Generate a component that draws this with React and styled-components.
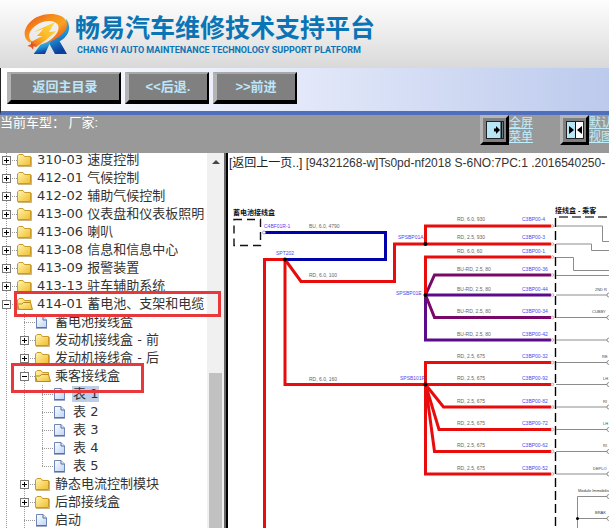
import React from 'react';
import styled, { createGlobalStyle } from 'styled-components';

const GlobalStyle = createGlobalStyle`
    * {
        box-sizing: border-box;
    }

    body {
        margin: 0;
        background: #fff;
        font-family: "Liberation Sans", "Noto Sans CJK SC", sans-serif;
        font-size: 13px;
        overflow: hidden;
    }
`;

const Page = styled.div`
    display: flex;
    flex-direction: column;
    height: 100vh;
    overflow: hidden;
`;

const Banner = styled.header`
    display: flex;
    align-items: flex-start;
    gap: 5px;
    flex: none;
    height: 68px;
    padding: 12px 0 0 23px;
    background: linear-gradient(#fdfdfd, #ececec 50%, #d9d9d9);
`;

const Brand = styled.div`
    color: #0b74b5;
    white-space: nowrap;
`;

const BrandName = styled.h1`
    margin: 0;
    font-size: 25px;
    line-height: 32px;
    font-weight: 700;
`;

const BrandSub = styled.p`
    margin: 0;
    padding-left: 2px;
    font-family: Roboto, "Liberation Sans", sans-serif;
    font-size: 9px;
    line-height: 13px;
    font-weight: 700;
`;

const NavBar = styled.nav`
    display: flex;
    align-items: flex-start;
    gap: 4px;
    flex: none;
    height: 47px;
    padding: 4px 6px;
    border-left: 1px solid #222;
    border-bottom: 4px solid #4f6fbc;
    background: linear-gradient(90deg, #fff, #e6ebfa 45%, #d3dcf4 70%, #bccaec);
`;

const NavButton = styled.button`
    width: ${props => props.$wide ? '114px' : '84px'};
    height: 32px;
    padding: 0;
    border-style: solid;
    border-width: 2px 2px 4px 4px;
    border-color: #a8a8a8 #000 #000 #b4b4b4;
    background: #808080;
    color: #bce6fb;
    font: inherit;
    font-weight: 700;
    line-height: 20px;
`;

const StatusBar = styled.div`
    display: flex;
    align-items: flex-start;
    justify-content: space-between;
    flex: none;
    height: 38px;
    overflow: hidden;
    background: #999;
    color: #fff;
`;

const CarInfo = styled.div`
    line-height: 16px;
    white-space: pre;
`;

const ViewTools = styled.div`
    display: flex;
    gap: 27px;
    flex: none;
    margin-right: -4px;
`;

const ViewTool = styled.div`
    display: flex;
`;

const ViewButton = styled.button`
    display: flex;
    align-items: center;
    justify-content: center;
    width: 29px;
    height: 30px;
    padding: 0;
    border: 3px solid;
    border-color: #b5b5b5 #000 #000 #b5b5b5;
    background: #808080;
`;

const ViewLink = styled.a`
    width: 24px;
    padding-top: 1px;
    color: #bfeefb;
    font-size: 12px;
    line-height: 14px;
    text-decoration: underline;
`;

const Content = styled.div`
    display: flex;
    flex: 1;
    min-height: 0;
`;

const Sidebar = styled.aside`
    display: flex;
    flex: 0 0 228px;
    overflow: hidden;
    border-right: 2px solid #000;
`;

const Tree = styled.ul`
    flex: 1;
    min-width: 0;
    margin: -2px 0 0;
    padding: 0;
    list-style: none;
    color: #333;
    font-family: "DejaVu Sans", "Noto Sans CJK SC", sans-serif;
`;

const TreeRow = styled.li`
    position: relative;
    display: flex;
    align-items: center;
    height: 18px;
    white-space: nowrap;
`;

const Guide = styled.span`
    flex: none;
    width: 18px;
    height: 18px;
    background: repeating-linear-gradient(#999 0 1px, transparent 1px 2px) 6px 0 / 1px 100% no-repeat;
`;

const Branch = styled.span`
    flex: none;
    display: flex;
    align-items: center;
    width: 17px;
    height: 18px;
    padding-left: 2px;
    background:
        repeating-linear-gradient(#999 0 1px, transparent 1px 2px) 6px 0 / 1px ${props => props.$last ? '50%' : '100%'} no-repeat,
        repeating-linear-gradient(90deg, #999 0 1px, transparent 1px 2px) 6px 9px / 11px 1px no-repeat;
`;

const Toggle = styled.button`
    display: flex;
    width: 9px;
    height: 9px;
    padding: 0;
    border: 1px solid #777;
    background: #fff;
`;

const TreeLink = styled.a`
    margin-left: 1px;
    padding: 0 1px;
    background: ${props => props.$selected ? '#bccfe6' : 'none'};
    color: inherit;
    line-height: 16px;
    text-decoration: none;
`;

/* red frame drawn over a tree row */
const Mark = styled.span`
    position: absolute;
    z-index: 1;
    top: -4px;
    left: ${props => props.$left}px;
    width: ${props => props.$width}px;
    height: ${props => props.$height}px;
    border: 3px solid #e9383b;
    pointer-events: none;
`;

const ScrollBar = styled.div`
    display: flex;
    flex-direction: column;
    align-items: center;
    justify-content: space-between;
    flex: none;
    width: 19px;
    padding-top: 6px;
    border-right: 2px solid #666;
    background: #f0f0f0;
`;

const ScrollThumb = styled.div`
    width: 13px;
    height: 42%;
    background: #c1c1c1;
`;

const Main = styled.main`
    flex: 1;
    min-width: 0;
    overflow: hidden;
`;

const DocTitle = styled.div`
    height: 25px;
    padding-left: 1px;
    color: #333;
    font-size: 12px;
    line-height: 20px;
    white-space: nowrap;

    a {
        color: #222;
        text-decoration: none;
    }
`;

const Diagram = styled.svg`
    display: block;
    font-family: "Liberation Sans", "Noto Sans CJK SC", sans-serif;
    font-size: 5px;
`;

const treeItems = [
    { level: 0, type: 'folder', text: '310-03 速度控制' },
    { level: 0, type: 'folder', text: '412-01 气候控制' },
    { level: 0, type: 'folder', text: '412-02 辅助气候控制' },
    { level: 0, type: 'folder', text: '413-00 仪表盘和仪表板照明' },
    { level: 0, type: 'folder', text: '413-06 喇叭' },
    { level: 0, type: 'folder', text: '413-08 信息和信息中心' },
    { level: 0, type: 'folder', text: '413-09 报警装置' },
    { level: 0, type: 'folder', text: '413-13 驻车辅助系统' },
    { level: 0, type: 'open', text: '414-01 蓄电池、支架和电缆', mark: { left: 14, width: 207, height: 26 } },
    { level: 1, type: 'page', text: '蓄电池接线盒' },
    { level: 1, type: 'folder', text: '发动机接线盒 - 前' },
    { level: 1, type: 'folder', text: '发动机接线盒 - 后' },
    { level: 1, type: 'open', text: '乘客接线盒', mark: { left: 11, width: 133, height: 30 } },
    { level: 2, type: 'page', text: '表 1', selected: true },
    { level: 2, type: 'page', text: '表 2' },
    { level: 2, type: 'page', text: '表 3' },
    { level: 2, type: 'page', text: '表 4' },
    { level: 2, type: 'page', text: '表 5', last: true },
    { level: 1, type: 'folder', text: '静态电流控制模块' },
    { level: 1, type: 'folder', text: '后部接线盒' },
    { level: 1, type: 'page', text: '启动' },
];

const RED = '#e80c0c';
const BLUE = '#0000ac';
const PLUM = '#7a0868';
const VIOLET = '#5a0c8c';

const wires = [
    [BLUE, '265,232.5 385.5,232.5 385.5,259.5 285,259.5'],
    [RED, '285,259.5 264.5,259.5 264.5,530'],
    [RED, '285,259.5 285,384.5 551,384.5'],
    [RED, '285,259.5 301,281.5 394.5,281.5 394.5,244 551,244'],
    [RED, '425.5,244 425.5,226 551,226'],
    [VIOLET, '425.5,295 425.5,340 551,340'],
    [PLUM, '425.5,295 434.5,275 551,275'],
    [PLUM, '425.5,295 434.5,317.5 551,317.5'],
    [VIOLET, '425.5,295 551,295'],
    [RED, '425.5,295 425.5,257 551,257'],
    [RED, '425.5,384.5 425.5,362.5 551,362.5'],
    [RED, '425.5,384.5 443.5,407 551,407'],
    [RED, '425.5,384.5 439,429.5 551,429.5'],
    [RED, '425.5,384.5 434.5,451.5 551,451.5'],
    [RED, '425.5,384.5 425.5,474 551,474'],
];

const thinWires = [
    '556,226 602.5,226 602.5,241.5 700,241.5',
    '556,244 591.5,244 591.5,250.5 700,250.5',
    '556,257.5 573.5,257.5 573.5,270.5 700,270.5',
    '556,275.5 700,275.5',
    '607,496.5 577.5,496.5 577.5,530',
    '577.5,518.5 607,518.5',
];

const pins = [
    { y: 226, base: 221, wire: 'RD, 6.0, 930', name: 'C3BP00-4' },
    { y: 244, base: 239, wire: 'RD, 2.5, 930', name: 'C3BP00-3' },
    { y: 257, base: 253, wire: 'RD, 6.0, 60', name: 'C3BP00-1' },
    { y: 275, base: 271, wire: 'BU-RD, 2.5, 80', name: 'C3BP00-36' },
    { y: 295, base: 291, wire: 'BU-RD, 2.5, 80', name: 'C3BP00-44', end: '2ND R', endX: 595 },
    { y: 317.5, base: 313, wire: 'BU-RD, 2.5, 80', name: 'C3BP00-34', end: 'CUBBY', endX: 592 },
    { y: 340, base: 336, wire: 'BU-RD, 2.5, 80', name: 'C3BP00-42' },
    { y: 362.5, base: 358, wire: 'RD, 2.5, 675', name: 'C3BP00-32', end: 'RE', endX: 602 },
    { y: 384.5, base: 380, wire: 'RD, 2.5, 675', name: 'C3BP00-92', end: 'LH', endX: 603 },
    { y: 407, base: 403, wire: 'RD, 2.5, 675', name: 'C3BP00-82', end: 'RI', endX: 603 },
    { y: 429.5, base: 425, wire: 'RD, 2.5, 675', name: 'C3BP00-72', end: 'LH', endX: 603 },
    { y: 451.5, base: 447, wire: 'RD, 2.5, 675', name: 'C3BP00-62', end: 'RI', endX: 603 },
    { y: 474, base: 470, wire: 'RD, 2.5, 675', name: 'C3BP00-52', end: 'DEPLO', endX: 593 },
];

const Logo = () => (
    <svg width="47" height="43" viewBox="40 20 141 129" aria-hidden="true">
        <defs>
            <linearGradient id="ring" x1="0" y1="0" x2="1" y2="1">
                <stop offset="0" stopColor="#e8481c" />
                <stop offset="0.35" stopColor="#f58a1a" />
                <stop offset="0.6" stopColor="#f9a324" />
                <stop offset="0.8" stopColor="#ee6a1c" />
                <stop offset="1" stopColor="#d83a1c" />
            </linearGradient>
            <linearGradient id="bolt" x1="1" y1="0" x2="0" y2="1">
                <stop offset="0" stopColor="#ffe14a" />
                <stop offset="0.6" stopColor="#fbb021" />
                <stop offset="1" stopColor="#ea5a1c" />
            </linearGradient>
            <linearGradient id="leg" x1="0" y1="0" x2="0.3" y2="1">
                <stop offset="0" stopColor="#6cc3a8" />
                <stop offset="0.55" stopColor="#2197dc" />
                <stop offset="1" stopColor="#0b3f9c" />
            </linearGradient>
        </defs>
        <path d="M170 40 Q190 72 164 98 Q158 104 150 108 L172 146 L136 146 L116 110 Q160 92 168 62 Z" fill="url(#leg)" />
        <path d="M92 118 L124 106 L106 146 L72 146 Z" fill="url(#leg)" />
        <path d="M60 112 C34 96 42 58 80 36 C112 20 156 22 170 46 C180 74 152 100 106 114 C134 98 150 78 146 62 C140 44 106 42 82 58 C58 74 52 94 66 108 Z" fill="url(#ring)" />
        <path d="M72 80 L136 50 L118 80 L140 78 L106 106 L78 126 L66 120 L64 110 L98 92 L82 92 L102 70 Z" fill="url(#bolt)" />
        <path d="M66 106 L70 116 L80 119 L72 123 L70 133 L64 125 L53 122 L63 117 Z" fill="#e4551f" />
    </svg>
);

const FolderIcon = ({ open }) => (
    <svg width="18" height="18" viewBox="0 0 18 18" aria-hidden="true">
        <defs>
            <linearGradient id="folder" x1="0" y1="0" x2="1" y2="1">
                <stop offset="0" stopColor="#fff6b0" />
                <stop offset="1" stopColor="#f0bd2c" />
            </linearGradient>
        </defs>
        <path d="M.5 14.5 V5 L2 3.5 H6 L7.5 5.5 H13.5 V14.5 Z" fill="url(#folder)" stroke="#c99a28" />
        {open
            ? <path d="M2 14.5 L.5 9 H5 L6.500 7.5 H13.500 L15.500 14.5 Z" fill="url(#folder)" stroke="#b98a1e" />
            : <path d="M1 15.5 H14.5 V6" fill="none" stroke="#a98030" opacity="0.6" />}
    </svg>
);

const PageIcon = () => (
    <svg width="18" height="18" viewBox="0 0 18 18" aria-hidden="true">
        <defs>
            <linearGradient id="page" x1="0" y1="0" x2="1" y2="1">
                <stop offset="0" stopColor="#fff" />
                <stop offset="1" stopColor="#bcd3f6" />
            </linearGradient>
        </defs>
        <path d="M1.5 3.5 H8 L11.5 7 V14.5 H1.5 Z" fill="url(#page)" stroke="#7186b8" />
        <path d="M8 3.5 V7 H11.5" fill="#e8f0fc" stroke="#56699c" />
        <path d="M1 15 H12" stroke="#46598c" />
    </svg>
);

const TreeItem = ({ item }) => (
    <TreeRow>
        {item.level > 0 && <Guide />}
        {item.level > 1 && <Guide />}
        <Branch $last={item.last}>
            {item.type !== 'page' && (
                <Toggle aria-label={item.text}>
                    <svg width="7" height="7" viewBox="0 0 7 7" aria-hidden="true">
                        <path d={item.type === 'open' ? 'M1 3.5 H6' : 'M1 3.5 H6 M3.5 1 V6'} stroke="#000" />
                    </svg>
                </Toggle>
            )}
        </Branch>
        {item.type === 'page' ? <PageIcon /> : <FolderIcon open={item.type === 'open'} />}
        <TreeLink href="#" $selected={item.selected}>{item.text}</TreeLink>
        {item.mark && <Mark $left={item.mark.left} $width={item.mark.width} $height={item.mark.height} />}
    </TreeRow>
);

const WiringDiagram = () => (
    <Diagram width="381" height="350" viewBox="228 178 381 350">
        <g fontSize="7" fontWeight="700" fill="#111">
            <text x="233" y="215">蓄电池接线盒</text>
            <text x="555" y="213">接线盒 - 乘客</text>
        </g>
        <rect x="234" y="219.5" width="26.5" height="26" fill="none" stroke="#111" strokeWidth="1.4" strokeDasharray="8 5" />
        <path d="M555.5 218 V530" stroke="#000" strokeWidth="1.4" strokeDasharray="9 4" />
        <path d="M559 217 H700" stroke="#444" strokeWidth="1.4" strokeDasharray="9 4" />

        {thinWires.map(points => (
            <polyline key={points} points={points} fill="none" stroke="#8c8c8c" strokeWidth="1" />
        ))}
        {wires.map(([color, points]) => (
            <polyline key={points} points={points} fill="none" stroke={color} strokeWidth="3" />
        ))}

        {pins.map(pin => (
            <g key={pin.name}>
                <text x="457" y={pin.base} fill="#666">{pin.wire}</text>
                <text x="522" y={pin.base} fill="#4a4af0">{pin.name}</text>
                <circle cx="552.5" cy={pin.y} r="1.3" fill="#fff" stroke="#d08080" strokeWidth="0.7" />
                {pin.y > 290 && (
                    <>
                        <path d={`M556 ${pin.y} H607`} stroke="#8c8c8c" />
                        <circle cx="609" cy={pin.y} r="2" fill="#fff" stroke="#777" strokeWidth="0.8" />
                    </>
                )}
                {pin.end && <text x={pin.endX} y={pin.base} fontSize="4" fill="#444">{pin.end}</text>}
            </g>
        ))}

        <circle cx="264" cy="232.5" r="1.5" fill="#fff" stroke="#8080d0" strokeWidth="0.7" />
        <circle cx="609" cy="496.5" r="2" fill="#fff" stroke="#777" strokeWidth="0.8" />
        <circle cx="609" cy="518.5" r="2" fill="#fff" stroke="#777" strokeWidth="0.8" />
        <circle cx="285" cy="259.5" r="2" />
        <circle cx="425.5" cy="244" r="2" />
        <circle cx="425.5" cy="295" r="2" />
        <circle cx="425.5" cy="384.5" r="2" />
        <circle cx="577.5" cy="518.5" r="1.5" />

        <g fill="#666">
            <text x="309" y="228">BU, 6.0, 4790</text>
            <text x="309" y="277">RD, 6.0, 100</text>
            <text x="309" y="381">RD, 6.0, 160</text>
        </g>
        <g fill="#4a4af0">
            <text x="264" y="228">C4BF01R-1</text>
            <text x="276" y="255">SPT202</text>
            <text x="398" y="239">SPSBP01A</text>
            <text x="396" y="295">SPSBP01E</text>
            <text x="400" y="380">SPSB101F</text>
        </g>
        <g fontSize="4" fill="#333">
            <text x="578" y="492">Module Immobilis</text>
            <text x="595" y="514">BRAK</text>
        </g>
    </Diagram>
);

const App = () => {
    return (
        <>
            <GlobalStyle />
            <Page>
                <Banner>
                    <Logo />
                    <Brand>
                        <BrandName>畅易汽车维修技术支持平台</BrandName>
                        <BrandSub>CHANG YI AUTO MAINTENANCE TECHNOLOGY SUPPORT PLATFORM</BrandSub>
                    </Brand>
                </Banner>
                <NavBar>
                    <NavButton $wide>返回主目录</NavButton>
                    <NavButton>&lt;&lt;后退.</NavButton>
                    <NavButton>&gt;&gt;前进</NavButton>
                </NavBar>
                <StatusBar>
                    <CarInfo>当前车型： 厂家:</CarInfo>
                    <ViewTools>
                        <ViewTool>
                            <ViewButton aria-label="全屏菜单">
                                <svg width="18" height="18" viewBox="0 0 18 18">
                                    <rect x="0.5" y="0.5" width="17" height="17" fill="#b9e6f6" stroke="#222" />
                                    <path d="M15.5 1 V17" stroke="#111" strokeWidth="2" />
                                    <path d="M8 7.5 H10 V5 L14 9 L10 13 V10.5 H8 Z" />
                                </svg>
                            </ViewButton>
                            <ViewLink href="#">全屏菜单</ViewLink>
                        </ViewTool>
                        <ViewTool>
                            <ViewButton aria-label="默认视图">
                                <svg width="18" height="18" viewBox="0 0 18 18">
                                    <rect x="0.5" y="0.5" width="17" height="17" fill="#fff" stroke="#222" />
                                    <path d="M1 1 H9 V17 H1 Z" fill="#b9e6f6" />
                                    <path d="M9.5 1 V17" stroke="#111" />
                                    <path d="M3 5 L8 9 L3 13 Z M16 5 L11 9 L16 13 Z" />
                                </svg>
                            </ViewButton>
                            <ViewLink href="#">默认视图</ViewLink>
                        </ViewTool>
                    </ViewTools>
                </StatusBar>
                <Content>
                    <Sidebar>
                        <Tree>
                            {treeItems.map(item => <TreeItem key={item.text} item={item} />)}
                        </Tree>
                        <ScrollBar>
                            <svg width="8" height="6" viewBox="0 0 8 6" aria-hidden="true">
                                <path d="M0 5 L4 1 L8 5 Z" fill="#444" />
                            </svg>
                            <ScrollThumb />
                        </ScrollBar>
                    </Sidebar>
                    <Main>
                        <DocTitle>
                            <a href="#">[返回上一页..]</a> [94321268-w]Ts0pd-nf2018 S-6NO:7PC:1 .2016540250-
                        </DocTitle>
                        <WiringDiagram />
                    </Main>
                </Content>
            </Page>
        </>
    );
};

export default App;
